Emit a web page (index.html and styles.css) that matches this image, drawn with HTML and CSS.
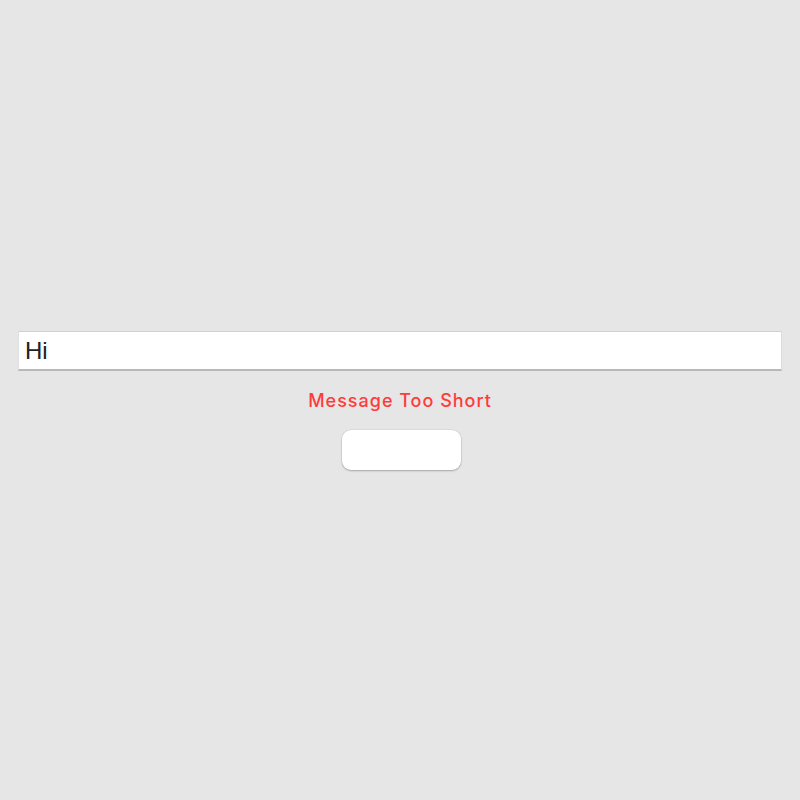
FILE: index.html
```html
<!DOCTYPE html>
<html>
<head>
<meta charset="utf-8">
<link rel="stylesheet" href="styles.css">
</head>
<body>
<main class="screen">
  <div class="form">
    <div class="field">Hi</div>
    <div class="error">Message Too Short</div>
    <button class="send" type="button"></button>
  </div>
</main>
</body>
</html>
```

FILE: styles.css
```css
html, body {
  margin: 0;
  padding: 0;
  background: #e6e6e6;
}
.screen {
  width: 800px;
  height: 800px;
  display: flex;
  align-items: center;
  justify-content: center;
  font-family: "Liberation Sans", Arial, sans-serif;
}
.form {
  width: 764px;
  display: flex;
  flex-direction: column;
  align-items: center;
  margin-top: 1px;
}
.field {
  box-sizing: border-box;
  width: 764px;
  height: 40px;
  background: #fff;
  border-top: 1px solid #d0d0d0;
  border-left: 1px solid #e0e0e0;
  border-right: 1px solid #dcdcdc;
  border-bottom: 2px solid #b8b8b8;
  padding: 0 6px;
  font-size: 24px;
  line-height: 37px;
  color: #222;
}
.error {
  margin-top: 18px;
  font-family: Inter, "Liberation Sans", sans-serif;
  font-weight: 500;
  font-size: 18px;
  line-height: 24px;
  color: #ff3b3b;
  letter-spacing: 1px;
}
.send {
  margin-top: 17px;
  margin-left: 2px;
  width: 119px;
  height: 40px;
  border: none;
  border-radius: 9px;
  background: #fff;
  box-shadow: 0 1px 2px rgba(0,0,0,0.25), 0 0 0 0.5px rgba(0,0,0,0.08);
  padding: 0;
}
```
